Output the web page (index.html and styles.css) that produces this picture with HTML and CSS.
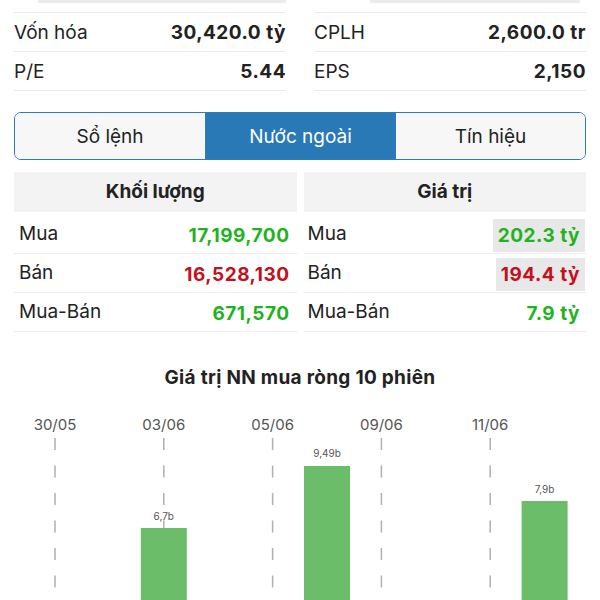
FILE: index.html
```html
<!DOCTYPE html>
<html lang="vi">
<head>
    <meta charset="UTF-8">
    <meta name="viewport" content="width=device-width, initial-scale=1.0">
    <title>Nước ngoài</title>
    <link rel="stylesheet" href="styles.css">
</head>
<body>
    <div class="page">
        <!-- bottom edge of the row scrolled above -->
        <div class="stats-edge">
            <span class="edge-left"></span>
            <span class="edge-right"></span>
        </div>

        <div class="stats">
            <div class="stats-col">
                <div class="stat-row"><span>Vốn hóa</span><b>30,420.0 tỷ</b></div>
                <div class="stat-row"><span>P/E</span><b>5.44</b></div>
            </div>
            <div class="stats-col">
                <div class="stat-row"><span>CPLH</span><b>2,600.0 tr</b></div>
                <div class="stat-row"><span>EPS</span><b>2,150</b></div>
            </div>
        </div>

        <div class="tabs">
            <button class="tab">Sổ lệnh</button>
            <button class="tab active">Nước ngoài</button>
            <button class="tab">Tín hiệu</button>
        </div>

        <div class="tables">
            <div class="table">
                <div class="table-head">Khối lượng</div>
                <div class="table-row"><span>Mua</span><b class="up">17,199,700</b></div>
                <div class="table-row"><span>Bán</span><b class="down">16,528,130</b></div>
                <div class="table-row"><span>Mua-Bán</span><b class="up">671,570</b></div>
            </div>
            <div class="table">
                <div class="table-head">Giá trị</div>
                <div class="table-row"><span>Mua</span><b class="up mark">202.3 tỷ</b></div>
                <div class="table-row"><span>Bán</span><b class="down mark">194.4 tỷ</b></div>
                <div class="table-row"><span>Mua-Bán</span><b class="up">7.9 tỷ</b></div>
            </div>
        </div>

        <h2 class="chart-title">Giá trị NN mua ròng 10 phiên</h2>

        <svg class="chart" width="600" height="200" viewBox="0 0 600 200">
            <g class="chart-dates">
                <text x="55" y="29">30/05</text>
                <text x="163.8" y="29">03/06</text>
                <text x="272.6" y="29">05/06</text>
                <text x="381.4" y="29">09/06</text>
                <text x="490.2" y="29">11/06</text>
            </g>
            <g class="chart-grid">
                <line x1="55" y1="37" x2="55" y2="200"/>
                <line x1="163.8" y1="37" x2="163.8" y2="200"/>
                <line x1="272.6" y1="37" x2="272.6" y2="200"/>
                <line x1="381.4" y1="37" x2="381.4" y2="200"/>
                <line x1="490.2" y1="37" x2="490.2" y2="200"/>
            </g>
            <g class="chart-bars">
                <rect x="140.8" y="127" width="46" height="73"/>
                <rect x="304" y="65" width="46" height="135"/>
                <rect x="521.6" y="100" width="46" height="100"/>
            </g>
            <g class="chart-values">
                <text x="163.8" y="119">6,7b</text>
                <text x="327" y="56">9,49b</text>
                <text x="544.6" y="92">7,9b</text>
            </g>
        </svg>
    </div>
</body>
</html>
```

FILE: styles.css
```css
body {
    margin: 0;
    font-family: Inter, "Liberation Sans", sans-serif;
    color: #222;
    background: #fff;
}

.page {
    padding: 0 14px;
    overflow: hidden;
    height: 600px;
}

/* stats */

.stats-edge {
    display: grid;
    grid-template-columns: 1fr 1fr;
    column-gap: 28px;
    height: 3px;
    margin-bottom: 9px;
}

.edge-left,
.edge-right {
    background: #ececec;
}

.edge-left {
    margin-left: 24px;
}

.edge-right {
    margin-left: 56px;
    margin-right: 6px;
}

.stats {
    display: grid;
    grid-template-columns: 1fr 1fr;
    column-gap: 28px;
}

.stat-row {
    display: flex;
    justify-content: space-between;
    align-items: center;
    height: 38px;
    border-top: 1px solid #ebebeb;
    font-size: 19px;
}

.stat-row:last-child {
    border-bottom: 1px solid #ebebeb;
}

.stat-row b {
    font-weight: 700;
    letter-spacing: 0.5px;
}

/* tabs */

.tabs {
    display: grid;
    grid-template-columns: 1fr 1fr 1fr;
    margin-top: 21px;
    height: 46px;
    border: 1px solid #2c7cbb;
    border-radius: 7px;
    overflow: hidden;
}

.tab {
    font-family: inherit;
    font-size: 19px;
    color: #222;
    background: #f7f7f7;
    border: none;
    padding: 0;
    cursor: pointer;
}

.tab + .tab {
    border-left: 1px solid #2c7cbb;
}

.tab.active {
    background: #2a79b7;
    color: #fff;
}

/* foreign tables */

.tables {
    display: grid;
    grid-template-columns: 1fr 1fr;
    column-gap: 7px;
    margin-top: 12px;
}

.table-head {
    height: 40px;
    line-height: 40px;
    text-align: center;
    background: #f3f3f3;
    font-size: 19px;
    font-weight: 700;
    margin-bottom: 3px;
}

.table-row {
    box-sizing: border-box;
    display: flex;
    justify-content: space-between;
    align-items: flex-end;
    height: 39px;
    padding: 0 2px 1px 5px;
    border-bottom: 1px solid #ededed;
    font-size: 19px;
}

.table-row span {
    align-self: center;
}

.table-row b {
    height: 33px;
    line-height: 33px;
    padding: 0 5px;
    font-weight: 700;
    letter-spacing: 0.5px;
}

.table:last-child .table-row {
    padding-left: 4px;
    padding-right: 1px;
}

.up {
    color: #1fb322;
}

.down {
    color: #c3111d;
}

.mark {
    background: #e8e8e8;
}

/* chart */

.chart-title {
    margin: 34px 0 11px;
    font-size: 19px;
    line-height: 24px;
    font-weight: 700;
    letter-spacing: 0.3px;
    text-align: center;
}

.chart {
    display: block;
    margin: 0 -14px;
}

.chart-dates text {
    font-size: 15px;
    fill: #555;
    text-anchor: middle;
}

.chart-grid line {
    stroke: #b0b0b0;
    stroke-width: 1.5;
    stroke-dasharray: 12 15.5;
}

.chart-bars rect {
    fill: #6cbd69;
}

.chart-values text {
    font-size: 10px;
    fill: #555;
    text-anchor: middle;
}
```
